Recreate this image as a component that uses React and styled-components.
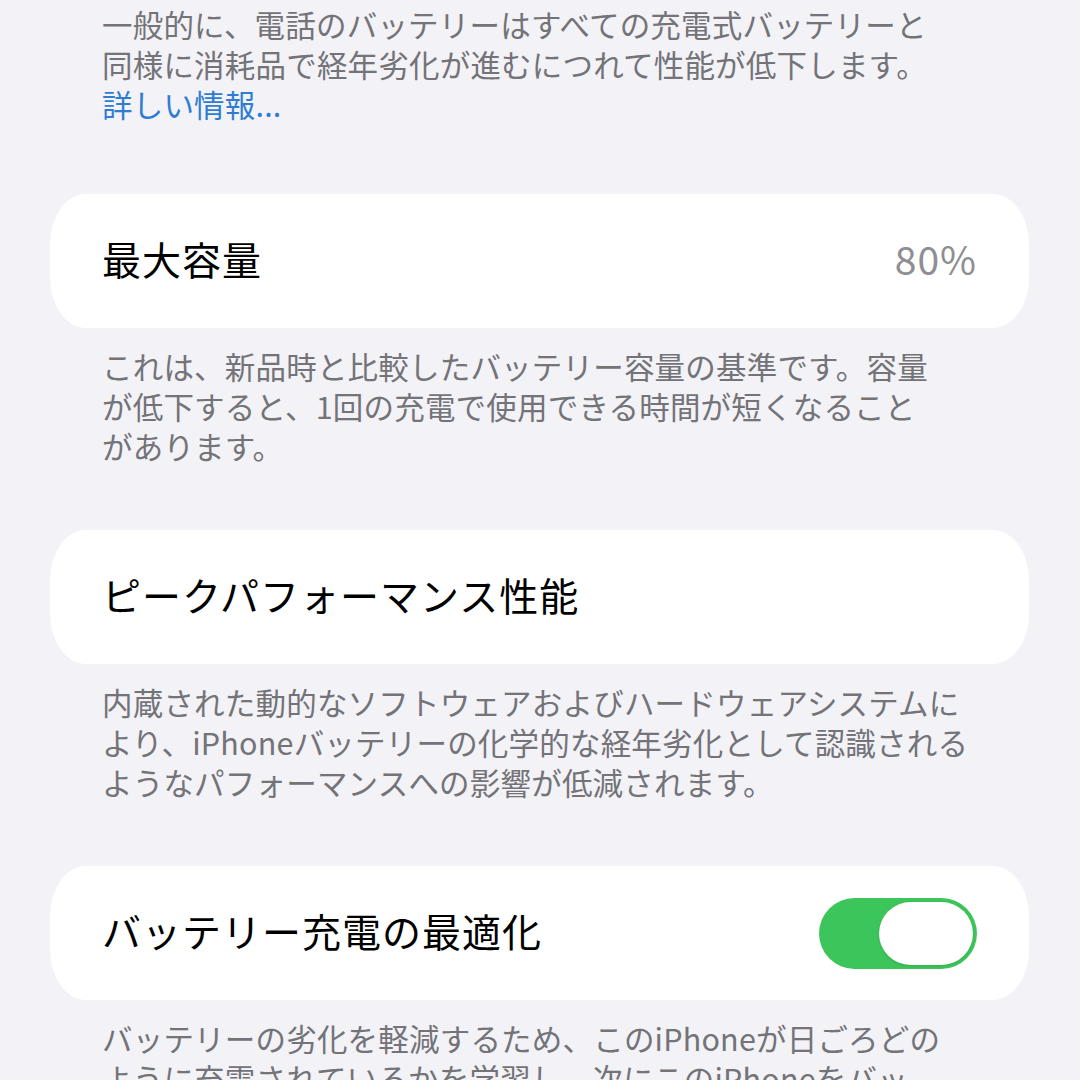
import React from "react";
import styled, { createGlobalStyle } from "styled-components";

const Global = createGlobalStyle`
  html, body {
    margin: 0;
    padding: 0;
    background: #f2f2f7;
    overflow: hidden;
  }
  body {
    font-family: "Noto Sans CJK JP", "Noto Sans", sans-serif;
    -webkit-font-smoothing: antialiased;
  }
`;

const Page = styled.div`
  width: 1080px;
  height: 1080px;
  overflow: hidden;
  background: #f2f2f7;
  padding-top: 4px;
  box-sizing: border-box;
  display: flex;
  flex-direction: column;
  & > * {
    flex-shrink: 0;
  }
`;

const Note = styled.p`
  margin: 0;
  padding: ${(p) => (p.$top ? `${p.$top}px` : "0")} 50px 0 102px;
  font-size: 30.5px;
  line-height: 40px;
  color: #737378;
  white-space: nowrap;
  letter-spacing: 0.2px;
`;

const Link = styled.span`
  color: #2f7dd3;
`;

const Card = styled.div`
  margin: ${(p) => p.$top}px 51px 0 50px;
  height: 134px;
  background: #ffffff;
  border-radius: 36px / 50px;
  display: flex;
  align-items: center;
  justify-content: space-between;
  padding: 0 52px 0 52px;
  box-sizing: border-box;
`;

const Title = styled.span`
  font-size: 39px;
  color: #000000;
  letter-spacing: 1px;
  padding-bottom: 6px;
`;

const Value = styled.span`
  font-size: 39px;
  color: #8e8e93;
  letter-spacing: 1px;
  padding-bottom: 6px;
`;

const Switch = styled.div`
  width: 158px;
  height: 71px;
  border-radius: 36px;
  background: #3cc55b;
  position: relative;
  flex-shrink: 0;
`;

const Knob = styled.div`
  position: absolute;
  top: 4px;
  right: 4px;
  width: 94px;
  height: 63px;
  border-radius: 32px;
  background: #ffffff;
  box-shadow: 0 1px 3px rgba(0, 0, 0, 0.12);
`;

export default function App() {
  return (
    <>
      <Global />
      <Page>
        <Note>
          一般的に、電話のバッテリーはすべての充電式バッテリーと
          <br />
          同様に消耗品で経年劣化が進むにつれて性能が低下します。
          <br />
          <Link>詳しい情報...</Link>
        </Note>

        <Card $top={70}>
          <Title>最大容量</Title>
          <Value>80%</Value>
        </Card>
        <Note $top={18}>
          これは、新品時と比較したバッテリー容量の基準です。容量
          <br />
          が低下すると、1回の充電で使用できる時間が短くなること
          <br />
          があります。
        </Note>

        <Card $top={64}>
          <Title>ピークパフォーマンス性能</Title>
        </Card>
        <Note $top={18}>
          内蔵された動的なソフトウェアおよびハードウェアシステムに
          <br />
          より、iPhoneバッテリーの化学的な経年劣化として認識される
          <br />
          ようなパフォーマンスへの影響が低減されます。
        </Note>

        <Card $top={64}>
          <Title>バッテリー充電の最適化</Title>
          <Switch>
            <Knob />
          </Switch>
        </Card>
        <Note $top={18}>
          バッテリーの劣化を軽減するため、このiPhoneが日ごろどの
          <br />
          ように充電されているかを学習し、次にこのiPhoneをバッ
        </Note>
      </Page>
    </>
  );
}
